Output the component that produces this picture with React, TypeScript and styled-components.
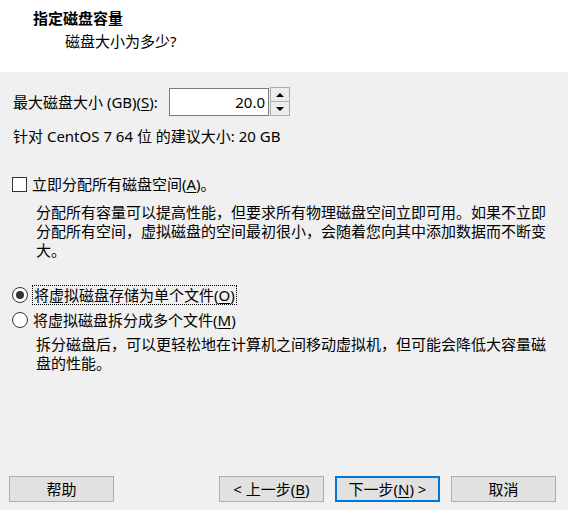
import React from "react";
import styled, { createGlobalStyle } from "styled-components";

const GlobalStyle = createGlobalStyle`
  html, body {
    margin: 0;
    padding: 0;
  }
  body {
    font-family: "Noto Sans", "Noto Sans CJK SC", sans-serif;
    font-size: 15px;
    color: #000;
  }
`;

const Window = styled.div`
  width: 568px;
  height: 510px;
  display: flex;
  flex-direction: column;
  overflow: hidden;
  background: #f0f0f0;
`;

const Header = styled.div`
  height: 72px;
  box-sizing: border-box;
  background: #fff;
  padding: 8px 0 0 33px;
`;

const Title = styled.div`
  font-weight: 700;
  line-height: 20px;
`;

const Subtitle = styled.div`
  line-height: 20px;
  margin: 3px 0 0 32px;
`;

const Body = styled.div`
  flex: 1;
  display: flex;
  flex-direction: column;
  padding: 0 12px 0 13px;
`;

const SizeRow = styled.div`
  display: flex;
  align-items: center;
  height: 29px;
  margin-top: 15px;
`;

const SizeLabel = styled.label`
  width: 156px;
  line-height: 20px;
  white-space: nowrap;
`;

const NumberBox = styled.div`
  width: 100px;
  height: 28px;
  box-sizing: border-box;
  border: 1px solid #7a7a7a;
  background: #fff;
  display: flex;
  align-items: center;
  justify-content: flex-end;
  padding-right: 3px;
  line-height: 20px;
`;

const Spinner = styled.div`
  width: 20px;
  height: 29px;
  margin-left: 1px;
  display: flex;
  flex-direction: column;
`;

const SpinButton = styled.div<{ $down?: boolean }>`
  flex: 1;
  box-sizing: border-box;
  border: 1px solid #acacac;
  border-top-width: ${(p) => (p.$down ? 0 : 1)}px;
  background: #ececec;
  display: flex;
  align-items: center;
  justify-content: center;
`;

const Arrow = styled.span<{ $down?: boolean }>`
  width: 0;
  height: 0;
  border-left: 4px solid transparent;
  border-right: 4px solid transparent;
  ${(p) =>
    p.$down ? "border-top: 4px solid #000;" : "border-bottom: 4px solid #000;"}
`;

const Hint = styled.div`
  line-height: 19px;
  margin-top: 11px;
`;

const OptionRow = styled.div<{ $gap: number }>`
  display: flex;
  align-items: center;
  height: 20px;
  margin-top: ${(p) => p.$gap}px;
`;

const CheckBox = styled.span`
  width: 15px;
  height: 15px;
  box-sizing: border-box;
  border: 1px solid #333;
  background: #fff;
  margin-left: -1px;
`;

const Radio = styled.span<{ $checked?: boolean }>`
  width: 16px;
  height: 16px;
  box-sizing: border-box;
  border: 1px solid #333;
  border-radius: 50%;
  background: #fff;
  display: flex;
  align-items: center;
  justify-content: center;
  margin-left: -1px;
  &::after {
    content: "";
    display: ${(p) => (p.$checked ? "block" : "none")};
    width: 8px;
    height: 8px;
    border-radius: 50%;
    background: #333;
  }
`;

const OptionLabel = styled.span<{ $focused?: boolean }>`
  margin-left: ${(p) => (p.$focused ? 4 : 5)}px;
  line-height: 18px;
  padding: 0 ${(p) => (p.$focused ? 1 : 0)}px;
  border: ${(p) => (p.$focused ? "1px dotted #000" : "none")};
  white-space: nowrap;
`;

const Description = styled.p<{ $gap: number }>`
  margin: ${(p) => p.$gap}px 0 0 23px;
  line-height: 19px;
  width: 512px;
`;

const Footer = styled.div`
  margin-top: auto;
  margin-left: -4px;
  padding-bottom: 8px;
  display: flex;
`;

const Button = styled.button<{ $primary?: boolean; $gap?: number }>`
  width: 105px;
  height: 26px;
  margin-left: ${(p) => p.$gap ?? 0}px;
  box-sizing: border-box;
  border: ${(p) => (p.$primary ? "2px solid #0078d7" : "1px solid #adadad")};
  background: #e1e1e1;
  font-family: inherit;
  font-size: 15px;
  line-height: 20px;
  color: #000;
  padding: 0;
`;

const Key = styled.span`
  text-decoration: underline;
  text-underline-offset: 2px;
`;

export default function App() {
  return (
    <>
      <GlobalStyle />
      <Window>
        <Header>
          <Title>指定磁盘容量</Title>
          <Subtitle>磁盘大小为多少?</Subtitle>
        </Header>
        <Body>
          <SizeRow>
            <SizeLabel>
              最大磁盘大小 (GB)(<Key>S</Key>):
            </SizeLabel>
            <NumberBox>20.0</NumberBox>
            <Spinner>
              <SpinButton>
                <Arrow />
              </SpinButton>
              <SpinButton $down>
                <Arrow $down />
              </SpinButton>
            </Spinner>
          </SizeRow>
          <Hint>针对 CentOS 7 64 位 的建议大小: 20 GB</Hint>

          <OptionRow $gap={28}>
            <CheckBox />
            <OptionLabel>
              立即分配所有磁盘空间(<Key>A</Key>)。
            </OptionLabel>
          </OptionRow>
          <Description $gap={9}>
            分配所有容量可以提高性能，但要求所有物理磁盘空间立即可用。如果不立即分配所有空间，虚拟磁盘的空间最初很小，会随着您向其中添加数据而不断变大。
          </Description>

          <OptionRow $gap={25}>
            <Radio $checked />
            <OptionLabel $focused>
              将虚拟磁盘存储为单个文件(<Key>O</Key>)
            </OptionLabel>
          </OptionRow>
          <OptionRow $gap={5}>
            <Radio />
            <OptionLabel>
              将虚拟磁盘拆分成多个文件(<Key>M</Key>)
            </OptionLabel>
          </OptionRow>
          <Description $gap={5}>
            拆分磁盘后，可以更轻松地在计算机之间移动虚拟机，但可能会降低大容量磁盘的性能。
          </Description>

          <Footer>
            <Button>帮助</Button>
            <Button $gap={105}>
              &lt; 上一步(<Key>B</Key>)
            </Button>
            <Button $primary $gap={11}>
              下一步(<Key>N</Key>) &gt;
            </Button>
            <Button $gap={11}>取消</Button>
          </Footer>
        </Body>
      </Window>
    </>
  );
}
